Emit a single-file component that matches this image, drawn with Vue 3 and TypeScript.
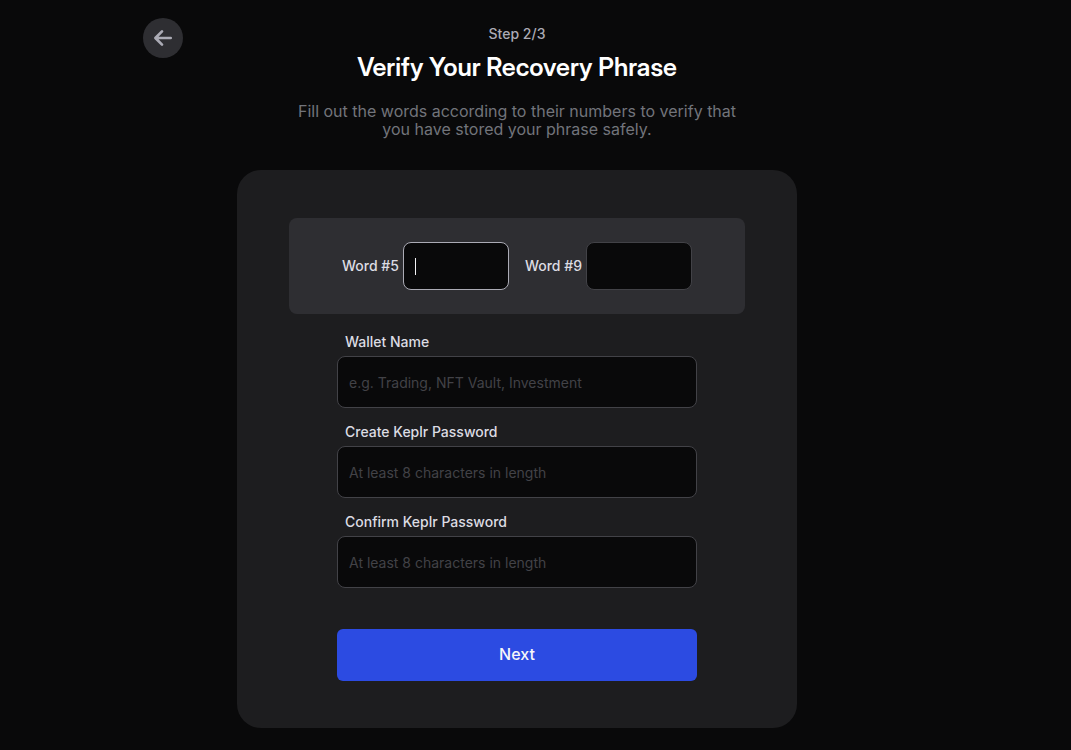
<script setup lang="ts">
import { onMounted, reactive, ref } from 'vue'

interface WordField {
  index: number
  value: string
}

interface TextField {
  id: string
  label: string
  type: 'text' | 'password'
  placeholder: string
  value: string
}

const words = reactive<WordField[]>([
  { index: 5, value: '' },
  { index: 9, value: '' },
])

const fields = reactive<TextField[]>([
  { id: 'wallet-name', label: 'Wallet Name', type: 'text', placeholder: 'e.g. Trading, NFT Vault, Investment', value: '' },
  { id: 'password', label: 'Create Keplr Password', type: 'password', placeholder: 'At least 8 characters in length', value: '' },
  { id: 'confirm-password', label: 'Confirm Keplr Password', type: 'password', placeholder: 'At least 8 characters in length', value: '' },
])

const form = ref<HTMLFormElement | null>(null)
const activeWord = ref<number | null>(5)

onMounted(() => {
  form.value?.querySelector<HTMLInputElement>('.word-input')?.focus()
})
</script>

<template>
  <main class="page">
    <div class="scene">
      <header class="header">
        <button class="back" type="button" aria-label="Back">
          <svg width="24" height="24" viewBox="0 0 24 24" fill="none" aria-hidden="true">
            <path d="M11 5.4 L4.4 12 L11 18.6 M4.8 12 H19.7" stroke="currentColor" stroke-width="2.7" stroke-linecap="round" stroke-linejoin="round" />
          </svg>
        </button>
        <div class="heading">
          <p class="step">Step 2/3</p>
          <h1 class="title">Verify Your Recovery Phrase</h1>
          <p class="intro">Fill out the words according to their numbers to verify that you have stored your phrase safely.</p>
        </div>
      </header>

      <form ref="form" class="card" @submit.prevent>
        <div class="words">
          <div v-for="word in words" :key="word.index" class="word">
            <label class="label" :for="`word-${word.index}`">Word #{{ word.index }}</label>
            <div class="word-box">
              <input
                :id="`word-${word.index}`"
                v-model="word.value"
                class="input word-input"
                :class="{ empty: word.value === '' }"
                type="text"
                autocomplete="off"
                @focus="activeWord = word.index"
                @blur="activeWord = null"
              />
              <span v-if="activeWord === word.index && word.value === ''" class="caret" aria-hidden="true"></span>
            </div>
          </div>
        </div>

        <div class="fields">
          <div v-for="field in fields" :key="field.id" class="field">
            <label class="label field-label" :for="field.id">{{ field.label }}</label>
            <input :id="field.id" v-model="field.value" class="input field-input" :type="field.type" :placeholder="field.placeholder" />
          </div>
          <button class="next" type="submit">Next</button>
        </div>
      </form>
    </div>
  </main>
</template>

<style>
body {
  background: #09090a;
}
</style>

<style scoped>
.page {
  box-sizing: border-box;
  min-height: 100vh;
  padding: 18px 37px 22px 0;
  background: #09090a;
  font-family: Inter, "Liberation Sans", sans-serif;
  color: #dcdce3;
}

.scene {
  max-width: 748px;
  margin: 0 auto;
}

.header {
  display: grid;
  grid-template-columns: 40px minmax(0, 1fr) 40px;
  align-items: start;
  margin-bottom: 32px;
}

.back {
  display: flex;
  align-items: center;
  justify-content: center;
  width: 40px;
  height: 40px;
  padding: 0;
  border: 0;
  border-radius: 50%;
  background: #2e2e32;
  color: #ababb5;
}

.heading {
  text-align: center;
}

.step {
  margin: 8px 0 0;
  font-size: 14px;
  font-weight: 500;
  line-height: 16px;
  color: #ababb5;
}

.title {
  margin: 8px 0 0;
  font-family: "Inter Display", Inter, "Liberation Sans", sans-serif;
  font-size: 25px;
  font-weight: 600;
  line-height: 34px;
  color: #fff;
}

.intro {
  max-width: 460px;
  margin: 18px auto 0;
  font-size: 16px;
  line-height: 18px;
  color: #72747b;
}

.card {
  box-sizing: border-box;
  max-width: 560px;
  margin: 0 auto;
  padding: 48px 52px 47px;
  border-radius: 24px;
  background: #1d1d1f;
}

.words {
  display: flex;
  justify-content: center;
  gap: 16px;
  padding: 24px 16px;
  border-radius: 8px;
  background: #2e2e32;
}

.word {
  display: flex;
  align-items: center;
  gap: 4px;
}

.word-box {
  position: relative;
  display: flex;
}

.caret {
  position: absolute;
  top: 16px;
  left: 12px;
  width: 1px;
  height: 17px;
  background: #f2f2f6;
  pointer-events: none;
}

.label {
  font-size: 14px;
  font-weight: 500;
  line-height: 16px;
}

.input {
  box-sizing: border-box;
  padding: 0 11px;
  border: 1px solid #424247;
  border-radius: 8px;
  outline: none;
  background: #09090a;
  font: 14px/20px Inter, "Liberation Sans", sans-serif;
  color: #f2f2f6;
}

.input:focus {
  border-color: #ababb5;
}

.input::placeholder {
  color: #424247;
  opacity: 1;
}

.word-input {
  width: 106px;
  height: 48px;
}

.word-input.empty {
  caret-color: transparent;
}

.fields {
  display: flex;
  flex-direction: column;
  gap: 16px;
  max-width: 360px;
  margin: 20px auto 0;
}

.field {
  display: flex;
  flex-direction: column;
  gap: 6px;
}

.field-label {
  padding-left: 8px;
}

.field-input {
  width: 100%;
  height: 52px;
}

.next {
  height: 52px;
  margin-top: 25px;
  padding: 0 16px 2px;
  border: 0;
  border-radius: 6px;
  background: #2c4be2;
  font: 500 16px/20px Inter, "Liberation Sans", sans-serif;
  color: #f6f6f9;
}
</style>
